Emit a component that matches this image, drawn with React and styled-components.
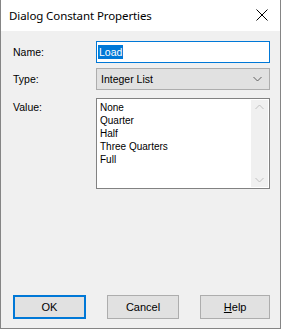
import React from 'react'
import styled, { createGlobalStyle } from 'styled-components';

const GlobalStyle = createGlobalStyle`
    html, body {
        margin: 0;
        padding: 0;
        background: #fff;
    }
    * {
        box-sizing: border-box;
    }
`;

const Window = styled.div`
    width: 281px;
    height: 329px;
    border: 1px solid #858585;
    border-top: none;
    display: flex;
    flex-direction: column;
    background: #f0f0f0;
    font-family: "Liberation Sans", Arial, sans-serif;
    color: #000;
`;

const TitleBar = styled.div`
    height: 31px;
    background: #fff;
    display: flex;
    align-items: center;
    justify-content: space-between;
    padding: 0 8px 1px 8px;
`;

const Title = styled.span`
    font-family: "Noto Sans", sans-serif;
    font-size: 11.5px;
    letter-spacing: -0.1px;
    color: #000;
`;

const CloseBox = styled.div`
    width: 20px;
    height: 20px;
    display: flex;
    align-items: center;
    justify-content: center;
`;

const Client = styled.div`
    flex: 1;
    display: flex;
    flex-direction: column;
    justify-content: space-between;
    padding: 10px 10px 9px 11px;
`;

const Form = styled.div`
    display: grid;
    grid-template-columns: 84px 174px;
    row-gap: 5px;
`;

const Label = styled.div`
    font-size: 10.5px;
    display: flex;
    align-items: ${props => props.$top ? 'flex-start' : 'center'};
    padding-top: ${props => props.$top ? '6px' : '0'};
    padding-left: 1px;
`;

const TextBox = styled.div`
    height: 22px;
    background: #fff;
    border: 1px solid #0078d7;
    display: flex;
    align-items: center;
    padding-left: 1px;
    font-size: 10.5px;
`;

const Selected = styled.span`
    background: #0078d7;
    color: #fff;
    padding: 1px 1px;
    line-height: 12px;
`;

const Combo = styled.div`
    height: 22px;
    background: #e1e1e1;
    border: 1px solid #adadad;
    display: flex;
    align-items: center;
    justify-content: space-between;
    padding: 0 7px 0 4px;
    font-size: 10.5px;
`;

const ListBox = styled.div`
    margin-top: 3px;
    height: 91px;
    background: #fff;
    border: 1px solid #828282;
    display: flex;
    justify-content: space-between;
`;

const Items = styled.div`
    padding: 2px 0 0 3px;
    display: flex;
    flex-direction: column;
`;

const Item = styled.div`
    font-size: 10px;
    line-height: 13px;
`;

const ScrollBar = styled.div`
    width: 17px;
    margin: 1px 1px 1px 0;
    background: #f0f0f0;
    display: flex;
    flex-direction: column;
    justify-content: space-between;
    align-items: center;
    padding: 4px 0;
`;

const Buttons = styled.div`
    display: flex;
    gap: 21px;
    padding-left: 1px;
`;

const Button = styled.div`
    width: ${props => props.$w || 73}px;
    height: 24px;
    background: #e1e1e1;
    border: ${props => props.$default ? '2px solid #0078d7' : '1px solid #adadad'};
    display: flex;
    align-items: center;
    justify-content: center;
    font-size: 11px;
`;

const Chevron = ({ up, color = '#606060' }) => (
    <svg width="9" height="6" viewBox="0 0 9 6">
        <polyline
            points={up ? '0.5,5 4.5,1 8.5,5' : '0.5,1 4.5,5 8.5,1'}
            fill="none"
            stroke={color}
            strokeWidth="1"
        />
    </svg>
);

const values = ['None', 'Quarter', 'Half', 'Three Quarters', 'Full'];

const App = () => {
    return (
        <>
            <GlobalStyle />
            <Window>
                <TitleBar>
                    <Title>Dialog Constant Properties</Title>
                    <CloseBox>
                        <svg width="12" height="12" viewBox="0 0 12 12">
                            <path d="M0.5 0.5 L11.5 11.5 M11.5 0.5 L0.5 11.5" stroke="#000" strokeWidth="1" />
                        </svg>
                    </CloseBox>
                </TitleBar>
                <Client>
                    <Form>
                        <Label>Name:</Label>
                        <TextBox><Selected>Load</Selected></TextBox>
                        <Label>Type:</Label>
                        <Combo>
                            <span>Integer List</span>
                            <Chevron />
                        </Combo>
                        <Label $top>Value:</Label>
                        <ListBox>
                            <Items>
                                {values.map(v => <Item key={v}>{v}</Item>)}
                            </Items>
                            <ScrollBar>
                                <Chevron up color="#c0c0c0" />
                                <Chevron color="#c0c0c0" />
                            </ScrollBar>
                        </ListBox>
                    </Form>
                    <Buttons>
                        <Button $default>OK</Button>
                        <Button>Cancel</Button>
                        <Button $w={70}><span><u>H</u>elp</span></Button>
                    </Buttons>
                </Client>
            </Window>
        </>
    )
}

export default App
